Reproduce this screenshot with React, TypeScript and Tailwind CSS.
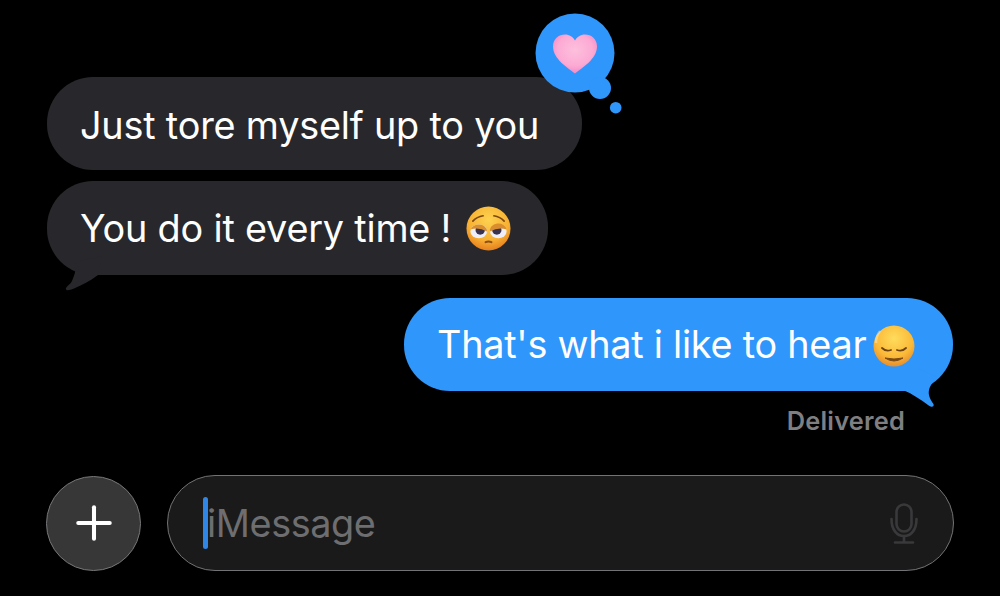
import { Plus } from "lucide-react";

const font = { fontFamily: "Inter, 'Liberation Sans', sans-serif" };

function Reaction() {
    return (
        <svg className="absolute left-[486px] top-[-64px]" width="96" height="106" viewBox="0 0 96 106">
            <defs>
                <radialGradient id="heart" cx="50%" cy="40%" r="62%">
                    <stop offset="0%" stopColor="#fdc0dc" />
                    <stop offset="65%" stopColor="#fcaad4" />
                    <stop offset="100%" stopColor="#f486c4" />
                </radialGradient>
            </defs>
            <circle cx="42" cy="40" r="39.5" fill="#2f96fb" />
            <circle cx="67" cy="75" r="11" fill="#2f96fb" />
            <circle cx="82.7" cy="94.7" r="5.8" fill="#2f96fb" />
            <path
                d="M42 60.5 C35 55 20 46 20 33.5 C20 26 25.5 21.5 32 21.5 C36.5 21.5 40 24 42 27.5 C44 24 47.5 21.5 52 21.5 C58.5 21.5 64 26 64 33.5 C64 46 49 55 42 60.5 Z"
                fill="url(#heart)"
            />
        </svg>
    );
}

function PleadingEmoji() {
    return (
        <svg className="block shrink-0" width="45" height="45" viewBox="0 0 46 46">
            <defs>
                <radialGradient id="pleading" cx="50%" cy="30%" r="72%">
                    <stop offset="0%" stopColor="#fdd24f" />
                    <stop offset="65%" stopColor="#f8b032" />
                    <stop offset="100%" stopColor="#e47c1e" />
                </radialGradient>
            </defs>
            <circle cx="23" cy="23" r="22.5" fill="url(#pleading)" />
            <path d="M7 15.5 Q11 11 17.5 10" stroke="#7d4712" strokeWidth="1.7" fill="none" strokeLinecap="round" />
            <path d="M39 15.5 Q35 11 28.5 10" stroke="#7d4712" strokeWidth="1.7" fill="none" strokeLinecap="round" />
            <ellipse cx="13" cy="26" rx="8.5" ry="7" fill="#eeeef8" />
            <ellipse cx="33" cy="26" rx="8.5" ry="7" fill="#eeeef8" />
            <circle cx="14.5" cy="24.5" r="4.8" fill="#3a3350" />
            <circle cx="31.5" cy="24.5" r="4.8" fill="#3a3350" />
            <path d="M4.5 26 A8.5 7 0 0 1 21.5 26 Q13 21.5 4.5 24 Z" fill="#d98d2c" />
            <path d="M24.5 26 A8.5 7 0 0 1 41.5 24 Q33 21.5 24.5 26 Z" fill="#d98d2c" />
            <path d="M20 37 Q23 35.5 26 37" stroke="#8a4f14" strokeWidth="2" fill="none" strokeLinecap="round" />
        </svg>
    );
}

function RelievedEmoji() {
    return (
        <svg className="block shrink-0" width="42" height="42" viewBox="0 0 42 42">
            <defs>
                <radialGradient id="relieved" cx="50%" cy="32%" r="70%">
                    <stop offset="0%" stopColor="#ffdc5c" />
                    <stop offset="65%" stopColor="#fbb938" />
                    <stop offset="100%" stopColor="#e58a2c" />
                </radialGradient>
            </defs>
            <circle cx="21" cy="21" r="20.5" fill="url(#relieved)" />
            <path d="M9 23 Q13 27 18 25" stroke="#6e4212" strokeWidth="1.8" fill="none" strokeLinecap="round" />
            <path d="M33 23 Q29 27 24 25" stroke="#6e4212" strokeWidth="1.8" fill="none" strokeLinecap="round" />
            <path d="M12 33 Q21 39 30 33 Q21 35 12 33 Z" fill="#7a4a14" stroke="#7a4a14" strokeWidth="1" strokeLinejoin="round" />
            <path d="M7 6 Q3 11 3 18" stroke="#ffffff" strokeOpacity="0.35" strokeWidth="2.5" fill="none" />
        </svg>
    );
}

function TailLeft() {
    return (
        <svg className="absolute left-[15px] top-[75px]" width="50" height="40" viewBox="0 0 50 40">
            <path d="M14 6 C14 16 12 20 10 25 C8 29 3 31 4 33.5 C5 35 8 34 12 32.5 C20 29 28 25 36 19 L40 0 Z" fill="#28282c" />
        </svg>
    );
}

function TailRight() {
    return (
        <svg className="absolute right-[16px] top-[70px]" width="60" height="42" viewBox="0 0 60 42">
            <path d="M26 22 C36 26 44 32 51 37 C54 39.5 57.5 39.5 56.5 36 C53 31 51 27 52 22 C53 17 57 13 60 9 L40 0 Z" fill="#2f96fb" />
        </svg>
    );
}

export default function App() {
    return (
        <div className="w-[1000px] h-[596px] bg-black flex flex-col overflow-hidden text-white" style={font}>
            <div className="flex flex-col px-[47px] pt-[77px]">
                <div className="relative self-start h-[93px] w-[535px] rounded-[46px] bg-[#28282c] flex items-center pl-[33px] text-[37.8px] tracking-[-0.2px]">
                    <span className="pt-[3px]">Just tore myself up to you</span>
                    <Reaction />
                </div>
                <div className="relative self-start mt-[11px] h-[94px] w-[501px] rounded-[46px] bg-[#28282c] flex items-center pl-[33px] text-[37.8px] tracking-[-0.2px]">
                    <span className="pt-[1px]">You do it every time !</span>
                    <span className="ml-[15px]"><PleadingEmoji /></span>
                    <TailLeft />
                </div>
            </div>

            <div className="flex flex-col items-end pr-[47px] mt-[23px]">
                <div className="relative h-[93px] w-[549px] rounded-[46px] bg-[#2f96fb] flex items-center pl-[33px] text-[37.8px] tracking-[-0.25px]">
                    <span>That's what i like to hear</span>
                    <span className="ml-[7px] mt-[3px]"><RelievedEmoji /></span>
                    <TailRight />
                </div>
                <div className="mt-[15px] mr-[48px] text-[25.4px] leading-[30px] font-semibold tracking-[0.2px] text-[#7f7f82]">
                    Delivered
                </div>
            </div>

            <div className="flex items-center gap-[26px] pl-[46px] pr-[46px] mt-[39px]">
                <div className="w-[95px] h-[95px] shrink-0 rounded-full bg-[#373737] border border-[#77777a] flex items-center justify-center">
                    <Plus size={54} strokeWidth={1.8} />
                </div>
                <div className="flex-1 h-[96px] rounded-[48px] bg-[#1a1a1a] border border-[#737375] flex items-center pl-[35px] pr-[35px]">
                    <div className="w-[5px] h-[52px] -mr-[1px] rounded-full bg-[#2f86e6]" />
                    <div className="flex-1 pt-[1px] text-[37.8px] text-[#6e6e70] tracking-[-0.4px]">iMessage</div>
                    <svg width="28" height="41" viewBox="0 0 28 41" fill="none" stroke="#39393b" strokeWidth="2.6" strokeLinecap="round">
                        <rect x="6.5" y="1.5" width="15" height="27" rx="7.5" />
                        <path d="M1.5 16 C1.5 27 7 33 14 33 C21 33 26.5 27 26.5 16" />
                        <path d="M14 33 V39.5 M5 39.5 H23" />
                    </svg>
                </div>
            </div>
        </div>
    );
}
